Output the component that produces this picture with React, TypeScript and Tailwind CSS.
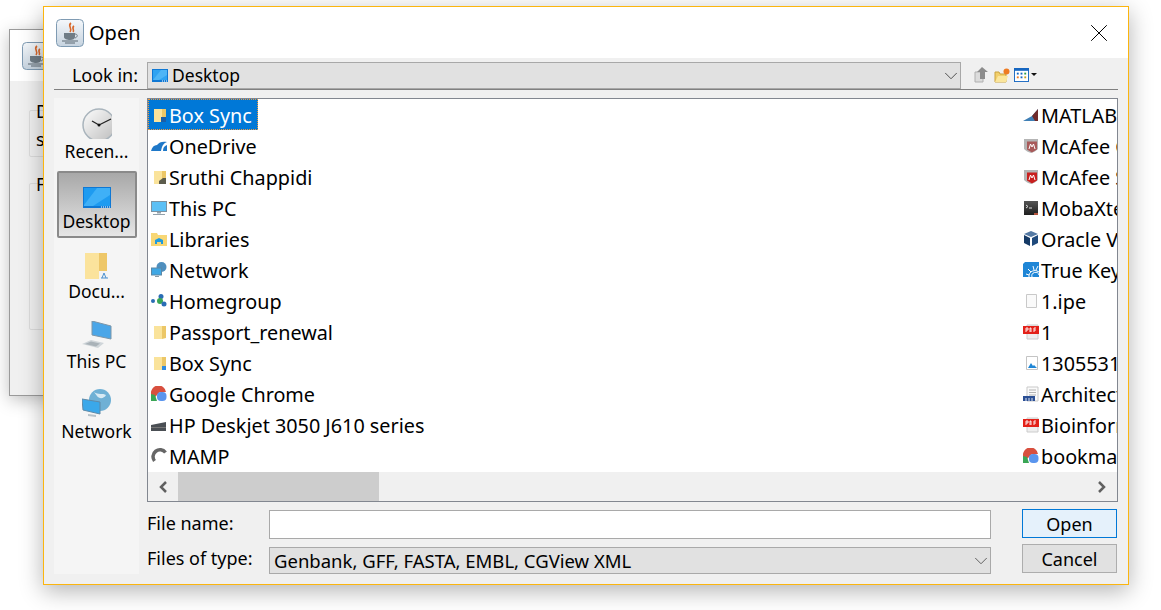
import { ChevronDown, X } from 'lucide-react';
import type { ReactNode } from 'react';

const FolderIcon = ({ badge }: { badge?: ReactNode }) => (
  <svg width="16" height="16" viewBox="0 0 16 16">
    <path d="M3 2h8v13H3z" fill="#fae39b" />
    <path d="M11 2h4v12l-4 1z" fill="#ecc767" />
    {badge}
  </svg>
);

const JavaIcon = ({ size = 28 }: { size?: number }) => (
  <svg width={size} height={size} viewBox="0 0 28 28">
    <defs>
      <linearGradient id="javaBg" x1="0" y1="0" x2="0" y2="1">
        <stop offset="0" stopColor="#f5f8fb" />
        <stop offset="1" stopColor="#c6d3df" />
      </linearGradient>
    </defs>
    <rect x="0.5" y="0.5" width="27" height="27" rx="4" fill="url(#javaBg)" stroke="#7f9bb3" />
    <path d="M15 4c-4 3 2 5-1 9M18 7c-3 2 1 4-1 6" fill="none" stroke="#d9682a" strokeWidth="1.6" />
    <path d="M8 14h11v4c0 2-2 3-5 3s-6-1-6-3z" fill="#6f7c86" />
    <path d="M19 15c3 0 3 3 0 4" fill="none" stroke="#6f7c86" />
    <path d="M6 22h16M9 24h10" stroke="#5c6973" strokeWidth="1.2" />
  </svg>
);

const MonitorIcon = () => (
  <svg width="16" height="16" viewBox="0 0 16 16">
    <rect x="0.5" y="1.5" width="15" height="10" fill="#5cc0f5" stroke="#7c93a3" />
    <path d="M6 12h4v1.5H6zM2 14h12v1H2z" fill="#93a1ab" />
  </svg>
);

const DesktopIcon = () => (
  <svg width="16" height="14" viewBox="0 0 16 14">
    <rect x="0" y="0" width="16" height="13" fill="#0f78d4" />
    <rect x="1" y="1" width="14" height="10" fill="#2ea3f2" />
    <path d="M9 1h6v5l-8 5H1z" fill="#4db5f6" />
    <path d="M10 12h5" stroke="#fff" strokeDasharray="1 1" />
  </svg>
);

const NetworkIcon = () => (
  <svg width="16" height="16" viewBox="0 0 16 16">
    <circle cx="10.5" cy="5" r="5" fill="#4f8fbe" />
    <rect x="0.5" y="6" width="10" height="7" fill="#3fa7e4" stroke="#5d87a5" />
    <path d="M4 14h4v1H4z" fill="#8a9aa5" />
  </svg>
);

const HomegroupIcon = () => (
  <svg width="16" height="16" viewBox="0 0 16 16">
    <circle cx="2" cy="8" r="2" fill="#2a6db5" />
    <circle cx="10" cy="3.5" r="2.5" fill="#2a6db5" />
    <circle cx="9" cy="8" r="3" fill="#3aa655" />
    <circle cx="13" cy="11" r="2.5" fill="#2a6db5" />
  </svg>
);

const ChromeIcon = () => (
  <svg width="16" height="16" viewBox="0 0 16 16">
    <path d="M0 15V8a7.500 7.500 0 0 1 15-2H9z" fill="#d8503f" />
    <path d="M0 15V8l4 1 2 6z" fill="#3aa655" />
    <rect x="6" y="6" width="9.500" height="9" rx="4" fill="#5a95ee" />
  </svg>
);

const OneDriveIcon = () => (
  <svg width="16" height="16" viewBox="0 0 16 16">
    <path d="M0 13c1-4 3-6 6-6 2-3 6-4 10-3-3 1-5 3-6 9z" fill="#1e78c8" />
    <path d="M12 13c0-3 1-5 4-6v6z" fill="#1e78c8" />
  </svg>
);

const LibrariesIcon = () => (
  <svg width="16" height="16" viewBox="0 0 16 16">
    <path d="M0 2h6l1 2h9v11H0z" fill="#f8d775" />
    <path d="M4 13V9l4-2 4 2v4h-2v-2H6v2z" fill="#1f9be0" />
  </svg>
);

const PrinterIcon = () => (
  <svg width="16" height="16" viewBox="0 0 16 16">
    <path d="M0 8l15-3v9H0z" fill="#4a4f54" />
    <path d="M0 10h15v1H0z" fill="#777" />
  </svg>
);

const MampIcon = () => (
  <svg width="16" height="16" viewBox="0 0 16 16">
    <path d="M14.500 4.500A6.500 6.500 0 1 0 3.500 13" fill="none" stroke="#666" strokeWidth="3.500" />
  </svg>
);

const MatlabIcon = () => (
  <svg width="16" height="16" viewBox="0 0 16 16">
    <path d="M0 14l9-5 6-7v12z" fill="#3f7fb5" />
    <path d="M9 9l6-7v12h-3z" fill="#6f2a2a" />
  </svg>
);

const McAfeeIcon = ({ faded }: { faded?: boolean }) => (
  <svg width="16" height="16" viewBox="0 0 16 16">
    <path d="M1 1h14v10c-2 2-4 3-7 4-3-1-5-2-7-4z" fill="#b5b5b5" />
    <path d="M4 3.500h10v8l-5 3-5-3z" fill={faded ? '#a85a5a' : '#c8201f'} />
    <path d="M6 11l1.500-5 1.500 3 1.500-3 1.500 5" fill="none" stroke="#fff" />
  </svg>
);

const TerminalIcon = () => (
  <svg width="16" height="16" viewBox="0 0 16 16">
    <defs>
      <linearGradient id="termBg" x1="0" y1="0" x2="0" y2="1">
        <stop offset="0" stopColor="#555" />
        <stop offset="1" stopColor="#1f1f1f" />
      </linearGradient>
    </defs>
    <rect x="1" y="1" width="14" height="14" fill="url(#termBg)" />
    <path d="M3 5l2 1.500-2 1.500M6 8h3" fill="none" stroke="#ddd" />
    <path d="M11 13h4v2h-4z" fill="#b5533c" />
  </svg>
);

const VBoxIcon = () => (
  <svg width="16" height="16" viewBox="0 0 16 16">
    <path d="M8 0l7 3-7 3-7-3z" fill="#5479a3" />
    <path d="M1 4l6 3v8l-6-3z" fill="#153a66" />
    <path d="M15 4l-6 3v8l6-3z" fill="#1f4a7c" />
  </svg>
);

const TrueKeyIcon = () => (
  <svg width="16" height="16" viewBox="0 0 16 16">
    <path d="M2 0h14v15H0V2z" fill="#1f86d6" />
    <path d="M6 15a6 6 0 0 1 10-5M9 15a3 3 0 0 1 7-2M3 12l3 1M5 7l3 3M10 4l1 4M15 4l-2 4" fill="none" stroke="#fff" />
  </svg>
);

const BlankFileIcon = () => (
  <svg width="16" height="16" viewBox="0 0 16 16">
    <path d="M3.500 1.500h10v13h-10z" fill="#fafafa" stroke="#c9c9c9" />
  </svg>
);

const PdfIcon = () => (
  <svg width="16" height="16" viewBox="0 0 16 16">
    <path d="M4 1h11v14H4z" fill="#eee" stroke="#ccc" />
    <rect x="0" y="2" width="16" height="8" fill="#e32119" />
    <path d="M3 8V4h2v2H3M7 8V4h1v4M11 8V4h2M11 6h2" fill="none" stroke="#fff" strokeWidth="0.900" />
  </svg>
);

const ImageFileIcon = () => (
  <svg width="16" height="16" viewBox="0 0 16 16">
    <path d="M3.500 1.500h11v13h-11z" fill="#fff" stroke="#c4c4c4" />
    <path d="M5 13l3-5 2 3 1-1 3 3z" fill="#1f86d6" />
  </svg>
);

const DocIcon = () => (
  <svg width="16" height="16" viewBox="0 0 16 16">
    <path d="M4 1h11v14H4z" fill="#fafafa" stroke="#c9c9c9" />
    <path d="M6 4h7M6 6.500h7M6 9h7" stroke="#b4b4b4" />
    <path d="M0 10h12v5H0z" fill="#2b4f94" />
    <path d="M3 12v3M6 12v3M9 12v3" stroke="#dfe6f2" />
  </svg>
);

const ClockIcon = () => (
  <svg width="31" height="31" viewBox="0 0 31 31">
    <defs>
      <linearGradient id="clockFace" x1="0" y1="0" x2="1" y2="1">
        <stop offset="0" stopColor="#fdfdfd" />
        <stop offset="1" stopColor="#bdbdbd" />
      </linearGradient>
    </defs>
    <circle cx="18" cy="17" r="16" fill="url(#clockFace)" stroke="#a9b4bc" strokeWidth="1.500" />
    <path d="M18 17l-7-4M18 17l12-6" stroke="#222" strokeWidth="1.300" />
    <circle cx="18" cy="17" r="1.500" fill="#111" />
  </svg>
);

const BigMonitorIcon = () => (
  <svg width="28" height="22" viewBox="0 0 28 22">
    <rect x="0" y="0" width="28" height="21" fill="#0f78d4" />
    <rect x="1" y="1" width="26" height="18" fill="#1e9bf0" />
    <path d="M14 1h13v7L10 19H1v-1z" fill="#3fb0f7" />
    <path d="M18 20h9" stroke="#fff" strokeDasharray="1 1" />
  </svg>
);

const BigFolderIcon = () => (
  <svg width="24" height="26" viewBox="0 0 24 26">
    <path d="M0 0h14v26H0z" fill="#fbe39c" />
    <path d="M14 0h8v18l-8 8z" fill="#eec768" />
    <path d="M14 18h9v8h-9z" fill="#f4f4f4" />
    <path d="M17 25l2-5 2 5M16 25h7" fill="none" stroke="#4a90d0" />
  </svg>
);

const LaptopIcon = () => (
  <svg width="30" height="28" viewBox="0 0 30 28">
    <path d="M10 0l19 5v13L10 14z" fill="#4aa6e8" stroke="#7d96a8" />
    <path d="M0 23l9-4 13 3-6 5z" fill="#cfd5d9" />
    <path d="M3 23l6-2.500 9 2-4 3z" fill="#a9b2b8" />
  </svg>
);

const GlobeMonitorIcon = () => (
  <svg width="30" height="30" viewBox="0 0 30 30">
    <circle cx="18" cy="11" r="11" fill="#6fb0d5" />
    <path d="M12 3c4 3 9 1 12 3-2 4-7 4-9 1z" fill="#d8eaf4" />
    <path d="M0 10l18 3v12L1 21z" fill="#3aa8ea" stroke="#5f8aa8" />
    <path d="M6 25l8 1v2l-8-1z" fill="#b7c2c9" />
  </svg>
);

const leftFiles: [ReactNode, string][] = [
  [<FolderIcon badge={<path d="M10 10h5v5h-5z" fill="#1a5ea8" />} />, 'Box Sync'],
  [<OneDriveIcon />, 'OneDrive'],
  [<FolderIcon badge={<path d="M8 12l4-3h3v6H8z" fill="#5c5c4c" />} />, 'Sruthi Chappidi'],
  [<MonitorIcon />, 'This PC'],
  [<LibrariesIcon />, 'Libraries'],
  [<NetworkIcon />, 'Network'],
  [<HomegroupIcon />, 'Homegroup'],
  [<FolderIcon />, 'Passport_renewal'],
  [<FolderIcon badge={<path d="M11 11h4v4h-4z" fill="#2f8ae0" />} />, 'Box Sync'],
  [<ChromeIcon />, 'Google Chrome'],
  [<PrinterIcon />, 'HP Deskjet 3050 J610 series'],
  [<MampIcon />, 'MAMP'],
];

const rightFiles: [ReactNode, string][] = [
  [<MatlabIcon />, 'MATLAB R2016a'],
  [<McAfeeIcon faded />, 'McAfee Central'],
  [<McAfeeIcon />, 'McAfee Security'],
  [<TerminalIcon />, 'MobaXterm'],
  [<VBoxIcon />, 'Oracle VM VirtualBox'],
  [<TrueKeyIcon />, 'True Key'],
  [<BlankFileIcon />, '1.ipe'],
  [<PdfIcon />, '1'],
  [<ImageFileIcon />, '13055313'],
  [<DocIcon />, 'Architecture'],
  [<PdfIcon />, 'Bioinformatics'],
  [<ChromeIcon />, 'bookmarks'],
];

const FileRow = ({ icon, name, selected }: { icon: ReactNode; name: string; selected?: boolean }) => (
  <div className="flex h-[31px] items-center">
    <div
      className={`flex h-[31px] items-center whitespace-nowrap ${
        selected ? 'bg-[#0078d7] text-white outline-1 -outline-offset-1 outline-dotted outline-[#f09a3e]' : ''
      }`}
    >
      <span className="ml-[3px] flex w-[16px] shrink-0">{icon}</span>
      <span className="ml-[2px] pr-[6px] pt-[3px] text-[19.800px]">{name}</span>
    </div>
  </div>
);

const Place = ({ icon, label, active, tall }: { icon: ReactNode; label: string; active?: boolean; tall?: boolean }) => (
  <div
    className={`flex w-[80px] flex-col items-center justify-end ${
      active
        ? 'h-[67px] rounded-[2px] border-2 border-[#8a8a8a] bg-gradient-to-b from-[#a8a8a8] to-[#e6e6e6] pb-[4px]'
        : tall
          ? 'h-[71px] pb-[9px]'
          : 'h-[70px] pb-[8px]'
    }`}
  >
    <div className="flex flex-1 items-end justify-center">{icon}</div>
    <span className="mt-[1px] text-[17.500px] leading-[22px]">{label}</span>
  </div>
);

const ScrollArrow = ({ d }: { d: string }) => (
  <svg width="10" height="12" viewBox="0 0 10 12">
    <path d={d} fill="none" stroke="#606060" strokeWidth="2.500" />
  </svg>
);

export default function App() {
  return (
    <div className="relative h-[610px] w-[1161px] overflow-hidden bg-white font-['Noto_Sans',sans-serif] text-black">
      {/* window behind the dialog */}
      <div className="absolute left-[9px] top-[29px] h-[367px] w-[300px] border border-[#9a9a9a] bg-[#f0f0f0] shadow-[0_4px_16px_rgba(0,0,0,0.25)]">
        <div className="flex h-[51px] items-center bg-white pl-[12px]">
          <JavaIcon />
        </div>
        <div className="ml-[19px] mt-[29px] h-[47px] w-[100px] rounded-[2px] border border-[#dcdcdc] pl-[6px] text-[18px] leading-[28px]">
          <div className="-mt-[14px]">D</div>
          <div>s</div>
        </div>
        <div className="ml-[19px] mt-[26px] h-[147px] w-[100px] rounded-[2px] border border-[#dcdcdc] pl-[6px] text-[18px] leading-[28px]">
          <div className="-mt-[14px]">F</div>
        </div>
      </div>

      {/* dialog */}
      <div className="absolute left-[43px] top-[6px] flex h-[579px] w-[1086px] flex-col border border-[#fbb50f] bg-[#f0f0f0] shadow-[0_6px_22px_rgba(0,0,0,0.3)]">
        <div className="flex h-[51px] shrink-0 items-center justify-between bg-white pl-[12px] pr-[14px]">
          <div className="flex items-center gap-[5px]">
            <JavaIcon />
            <span className="text-[20px]">Open</span>
          </div>
          <X size={30} strokeWidth={0.8} />
        </div>

        <div className="mx-[10px] mt-[4px] flex h-[28px] shrink-0 items-start border-b border-[#808080]">
          <span className="w-[84px] text-right text-[18px] leading-[27px]">Look in:</span>
          <div className="ml-[9px] flex h-[27px] w-[814px] items-center border border-[#a8a8a8] bg-[#e1e1e1] pl-[4px]">
            <DesktopIcon />
            <span className="ml-[4px] flex-1 text-[17.500px]">Desktop</span>
            <ChevronDown size={22} strokeWidth={1} className="-mr-[2px] text-[#444]" />
          </div>
          <div className="ml-[13px] flex items-center pt-[5px]">
            <svg width="14" height="16" viewBox="0 0 14 16">
              <path d="M1 5h8v10H1z" fill="#dcdcdc" stroke="#b0b0b0" />
              <path d="M8 0l6 5h-3v7H6V5H3z" fill="#8c8c8c" />
            </svg>
            <svg className="ml-[6px]" width="16" height="15" viewBox="0 0 16 15">
              <path d="M1 4h4l1 2h6v8H1z" fill="#f2cf6b" stroke="#caa33f" />
              <path d="M1 14l3-6h10l-2 6z" fill="#fbe69c" />
              <circle cx="12.500" cy="3.500" r="3" fill="#ee7b22" />
            </svg>
            <svg className="ml-[4px]" width="15" height="14" viewBox="0 0 16 15">
              <rect x="0.500" y="0.500" width="15" height="14" fill="#fff" stroke="#1666c0" />
              <path d="M0 0h16v3H0z" fill="#1666c0" />
              <path d="M3 5h2v2H3z" fill="#1666c0" />
              <path d="M7 5h2v2H7z" fill="#1666c0" />
              <path d="M11 5h2v2h-2z" fill="#2f9e44" />
              <path d="M3 9h2v2H3z" fill="#ee7b22" />
              <path d="M7 9h2v2H7z" fill="#1666c0" />
              <path d="M11 9h2v2h-2z" fill="#c8a018" />
            </svg>
            <svg className="ml-[2px]" width="6" height="4" viewBox="0 0 6 4">
              <path d="M0 0h6L3 3z" fill="#111" />
            </svg>
          </div>
        </div>

        <div className="mx-[10px] mt-[8px] flex min-h-0 flex-1 pb-[10px]">
          <div className="flex w-[85px] shrink-0 flex-col items-center bg-[#f5f5f5] pt-[2px]">
            <Place tall icon={<ClockIcon />} label="Recen..." />
            <Place active icon={<BigMonitorIcon />} label="Desktop" />
            <div className="h-[2px] shrink-0" />
            <Place icon={<BigFolderIcon />} label="Docu..." />
            <Place icon={<LaptopIcon />} label="This PC" />
            <Place icon={<GlobeMonitorIcon />} label="Network" />
          </div>

          <div className="ml-[8px] flex w-[971px] flex-col">
            <div className="flex h-[404px] shrink-0 flex-col border border-[#828790] bg-white">
              <div className="flex h-[373px] overflow-hidden">
                <div className="w-[872px] shrink-0">
                  {leftFiles.map(([icon, name], i) => (
                    <FileRow key={i} icon={icon} name={name} selected={i === 0} />
                  ))}
                </div>
                <div className="min-w-0 flex-1 overflow-hidden">
                  {rightFiles.map(([icon, name], i) => (
                    <FileRow key={i} icon={icon} name={name} />
                  ))}
                </div>
              </div>
              <div className="flex h-[29px] items-center justify-between bg-[#f0f0f0]">
                <div className="flex h-full items-center">
                  <div className="flex w-[30px] justify-center">
                    <ScrollArrow d="M8 1L3 6l5 5" />
                  </div>
                  <div className="h-full w-[201px] bg-[#cdcdcd]" />
                </div>
                <div className="flex w-[30px] justify-center">
                  <ScrollArrow d="M2 1l5 5-5 5" />
                </div>
              </div>
            </div>

            <div className="mt-[7px] flex">
              <div className="flex w-[844px] shrink-0 flex-col">
                <div className="flex h-[30px] items-center">
                  <span className="w-[122px] pb-[1px] text-[18px]">File name:</span>
                  <div className="h-[29px] flex-1 self-end border border-[#a9a9a9] bg-white" />
                </div>
                <div className="mt-[8px] flex h-[27px] items-center">
                  <span className="w-[122px] pb-[4px] text-[18px]">Files of type:</span>
                  <div className="flex h-[27px] flex-1 items-center border border-[#a9a9a9] bg-[#e1e1e1] pl-[4px]">
                    <span className="flex-1 text-[18.500px]">Genbank, GFF, FASTA, EMBL, CGView XML</span>
                    <ChevronDown size={22} strokeWidth={1} className="-mr-[2px] text-[#555]" />
                  </div>
                </div>
              </div>
              <div className="ml-[31px] flex w-[95px] flex-col">
                <button className="h-[29px] border border-[#0078d7] bg-[#e5f1fb] pt-[1px] text-[18px]">Open</button>
                <button className="mt-[6px] h-[29px] border border-[#adadad] bg-[#e1e1e1] pt-[1px] text-[18px]">Cancel</button>
              </div>
            </div>
          </div>
        </div>
      </div>
    </div>
  );
}
